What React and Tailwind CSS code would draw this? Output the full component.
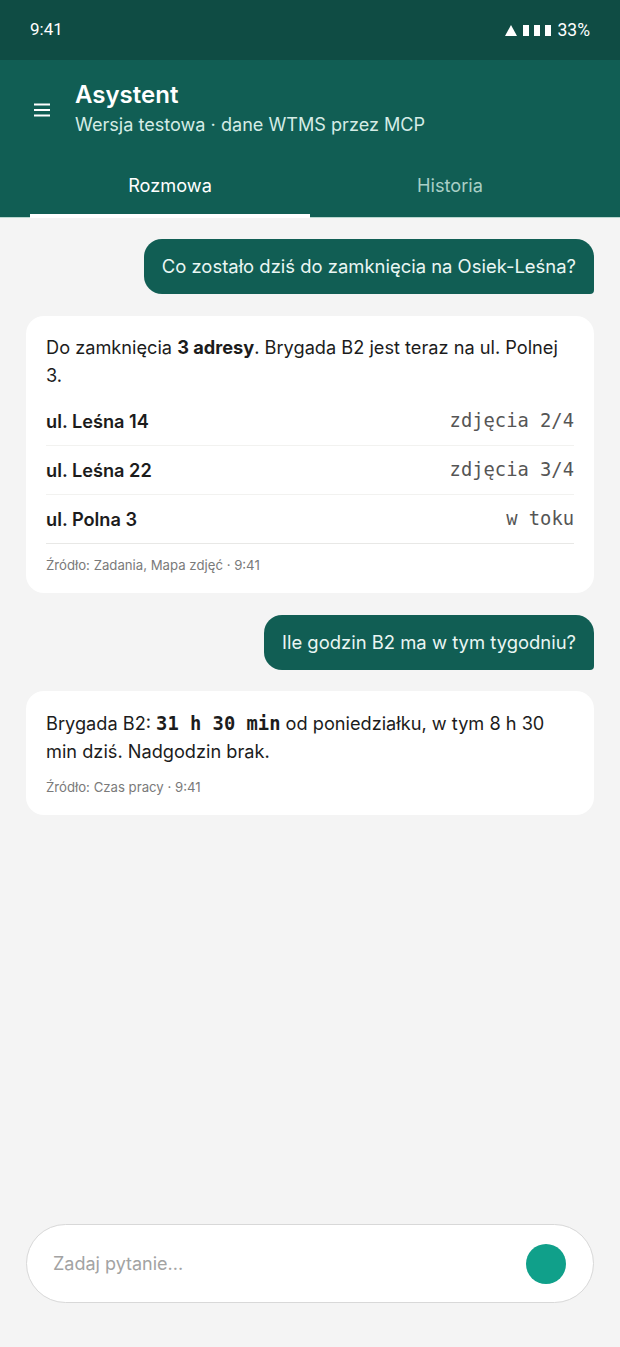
const sans = "font-['Inter','Noto_Sans',sans-serif]";

function UserBubble({ children }) {
  return (
    <div className="flex justify-end">
      <div className="rounded-[18px] rounded-br-[4px] bg-[#115e54] px-[18px] py-[14px] text-[18.45px] leading-[27px] text-[#eaf6f3]">
        {children}
      </div>
    </div>
  );
}

function Row({ name, value, last }) {
  return (
    <div className={`flex h-[49px] items-center justify-between border-b pb-[1px] ${last ? "border-[#e8e8e6]" : "border-[#f2f2f0]"}`}>
      <span className="text-[18.2px] font-semibold text-[#1c1c1c]">{name}</span>
      <span className="mt-[1px] font-['DejaVu_Sans_Mono',monospace] text-[18.8px] text-[#555]">{value}</span>
    </div>
  );
}

export default function App() {
  return (
    <div className={`flex h-[1347px] w-[620px] flex-col overflow-hidden bg-[#f4f4f4] ${sans}`}>
      <div className="flex h-[60px] items-center justify-between bg-[#0f4c44] px-[30px] font-['Roboto',sans-serif] text-[17px] text-white">
        <span>9:41</span>
        <div className="flex items-center">
          <svg width="12" height="11" viewBox="0 0 12 11" className="mr-[6px]"><path d="M6 0 L12 11 H0 Z" fill="#fff" /></svg>
          <div className="mr-[7px] flex gap-[5px]">
            <span className="h-[11px] w-[6px] bg-white" />
            <span className="h-[11px] w-[6px] bg-white" />
            <span className="h-[11px] w-[6px] bg-white" />
          </div>
          <span className="text-[17.5px]">33%</span>
        </div>
      </div>

      <div className="bg-[#115e54]">
        <div className="flex items-center pl-[34px] pt-[20px]">
          <svg width="16" height="14" viewBox="0 0 16 14" className="mr-[25px] mt-[1px]">
            <path d="M0 1.5H16M0 7H16M0 12.5H16" stroke="#fff" strokeWidth="2" />
          </svg>
          <div>
            <div className="text-[24px] font-semibold leading-[29px] text-white">Asystent</div>
            <div className="mt-[1px] text-[18.1px] leading-[28px] text-[#d5ece6]">Wersja testowa · dane WTMS przez MCP</div>
          </div>
        </div>
        <div className="mt-[21px] flex border-b border-[#b9d6cf] px-[30px] text-[18.2px]">
          <div className="-mb-[1px] flex h-[59px] w-[280px] items-center justify-center border-b-[4px] border-white pb-[2px] text-white">Rozmowa</div>
          <div className="flex h-[58px] w-[280px] items-center justify-center pb-[5px] text-[#a9cfc6]">Historia</div>
        </div>
      </div>

      <div className="flex flex-1 flex-col gap-[22px] px-[26px] pt-[21px]">
        <UserBubble>Co zostało dziś do zamknięcia na Osiek-Leśna?</UserBubble>

        <div className="rounded-[18px] bg-white px-[20px] pb-[18px] pt-[17px] text-[18.2px] leading-[28px] text-[#1c1c1c]">
          <p>Do zamknięcia <b className="font-bold">3 adresy</b>. Brygada B2 jest teraz na ul. Polnej<br />3.</p>
          <div className="mt-[8px]">
            <Row name="ul. Leśna 14" value="zdjęcia 2/4" />
            <Row name="ul. Leśna 22" value="zdjęcia 3/4" />
            <Row name="ul. Polna 3" value="w toku" last />
          </div>
          <div className="mt-[11px] text-[13.2px] leading-[20px] text-[#7a7a7a]">Źródło: Zadania, Mapa zdjęć · 9:41</div>
        </div>

        <UserBubble>Ile godzin B2 ma w tym tygodniu?</UserBubble>

        <div className="-mt-[1px] rounded-[18px] bg-white px-[20px] pb-[18px] pt-[18px] text-[18.2px] leading-[28px] text-[#1c1c1c]">
          <p>Brygada B2: <b className="font-['DejaVu_Sans_Mono',monospace] text-[18.8px] font-bold leading-none">31 h 30 min</b> od poniedziałku, w tym 8 h 30<br />min dziś. Nadgodzin brak.</p>
          <div className="mt-[12px] text-[13.2px] leading-[20px] text-[#7a7a7a]">Źródło: Czas pracy · 9:41</div>
        </div>
      </div>

      <div className="px-[26px] pb-[44px]">
        <div className="flex h-[79px] items-center justify-between rounded-full border border-[#d8d8d8] bg-white pl-[26px] pr-[26px]">
          <span className="text-[18px] text-[#a3a3a3]">Zadaj pytanie...</span>
          <div className="mr-[1px] h-[40px] w-[40px] rounded-full bg-[#10a08a]" />
        </div>
      </div>
    </div>
  );
}
